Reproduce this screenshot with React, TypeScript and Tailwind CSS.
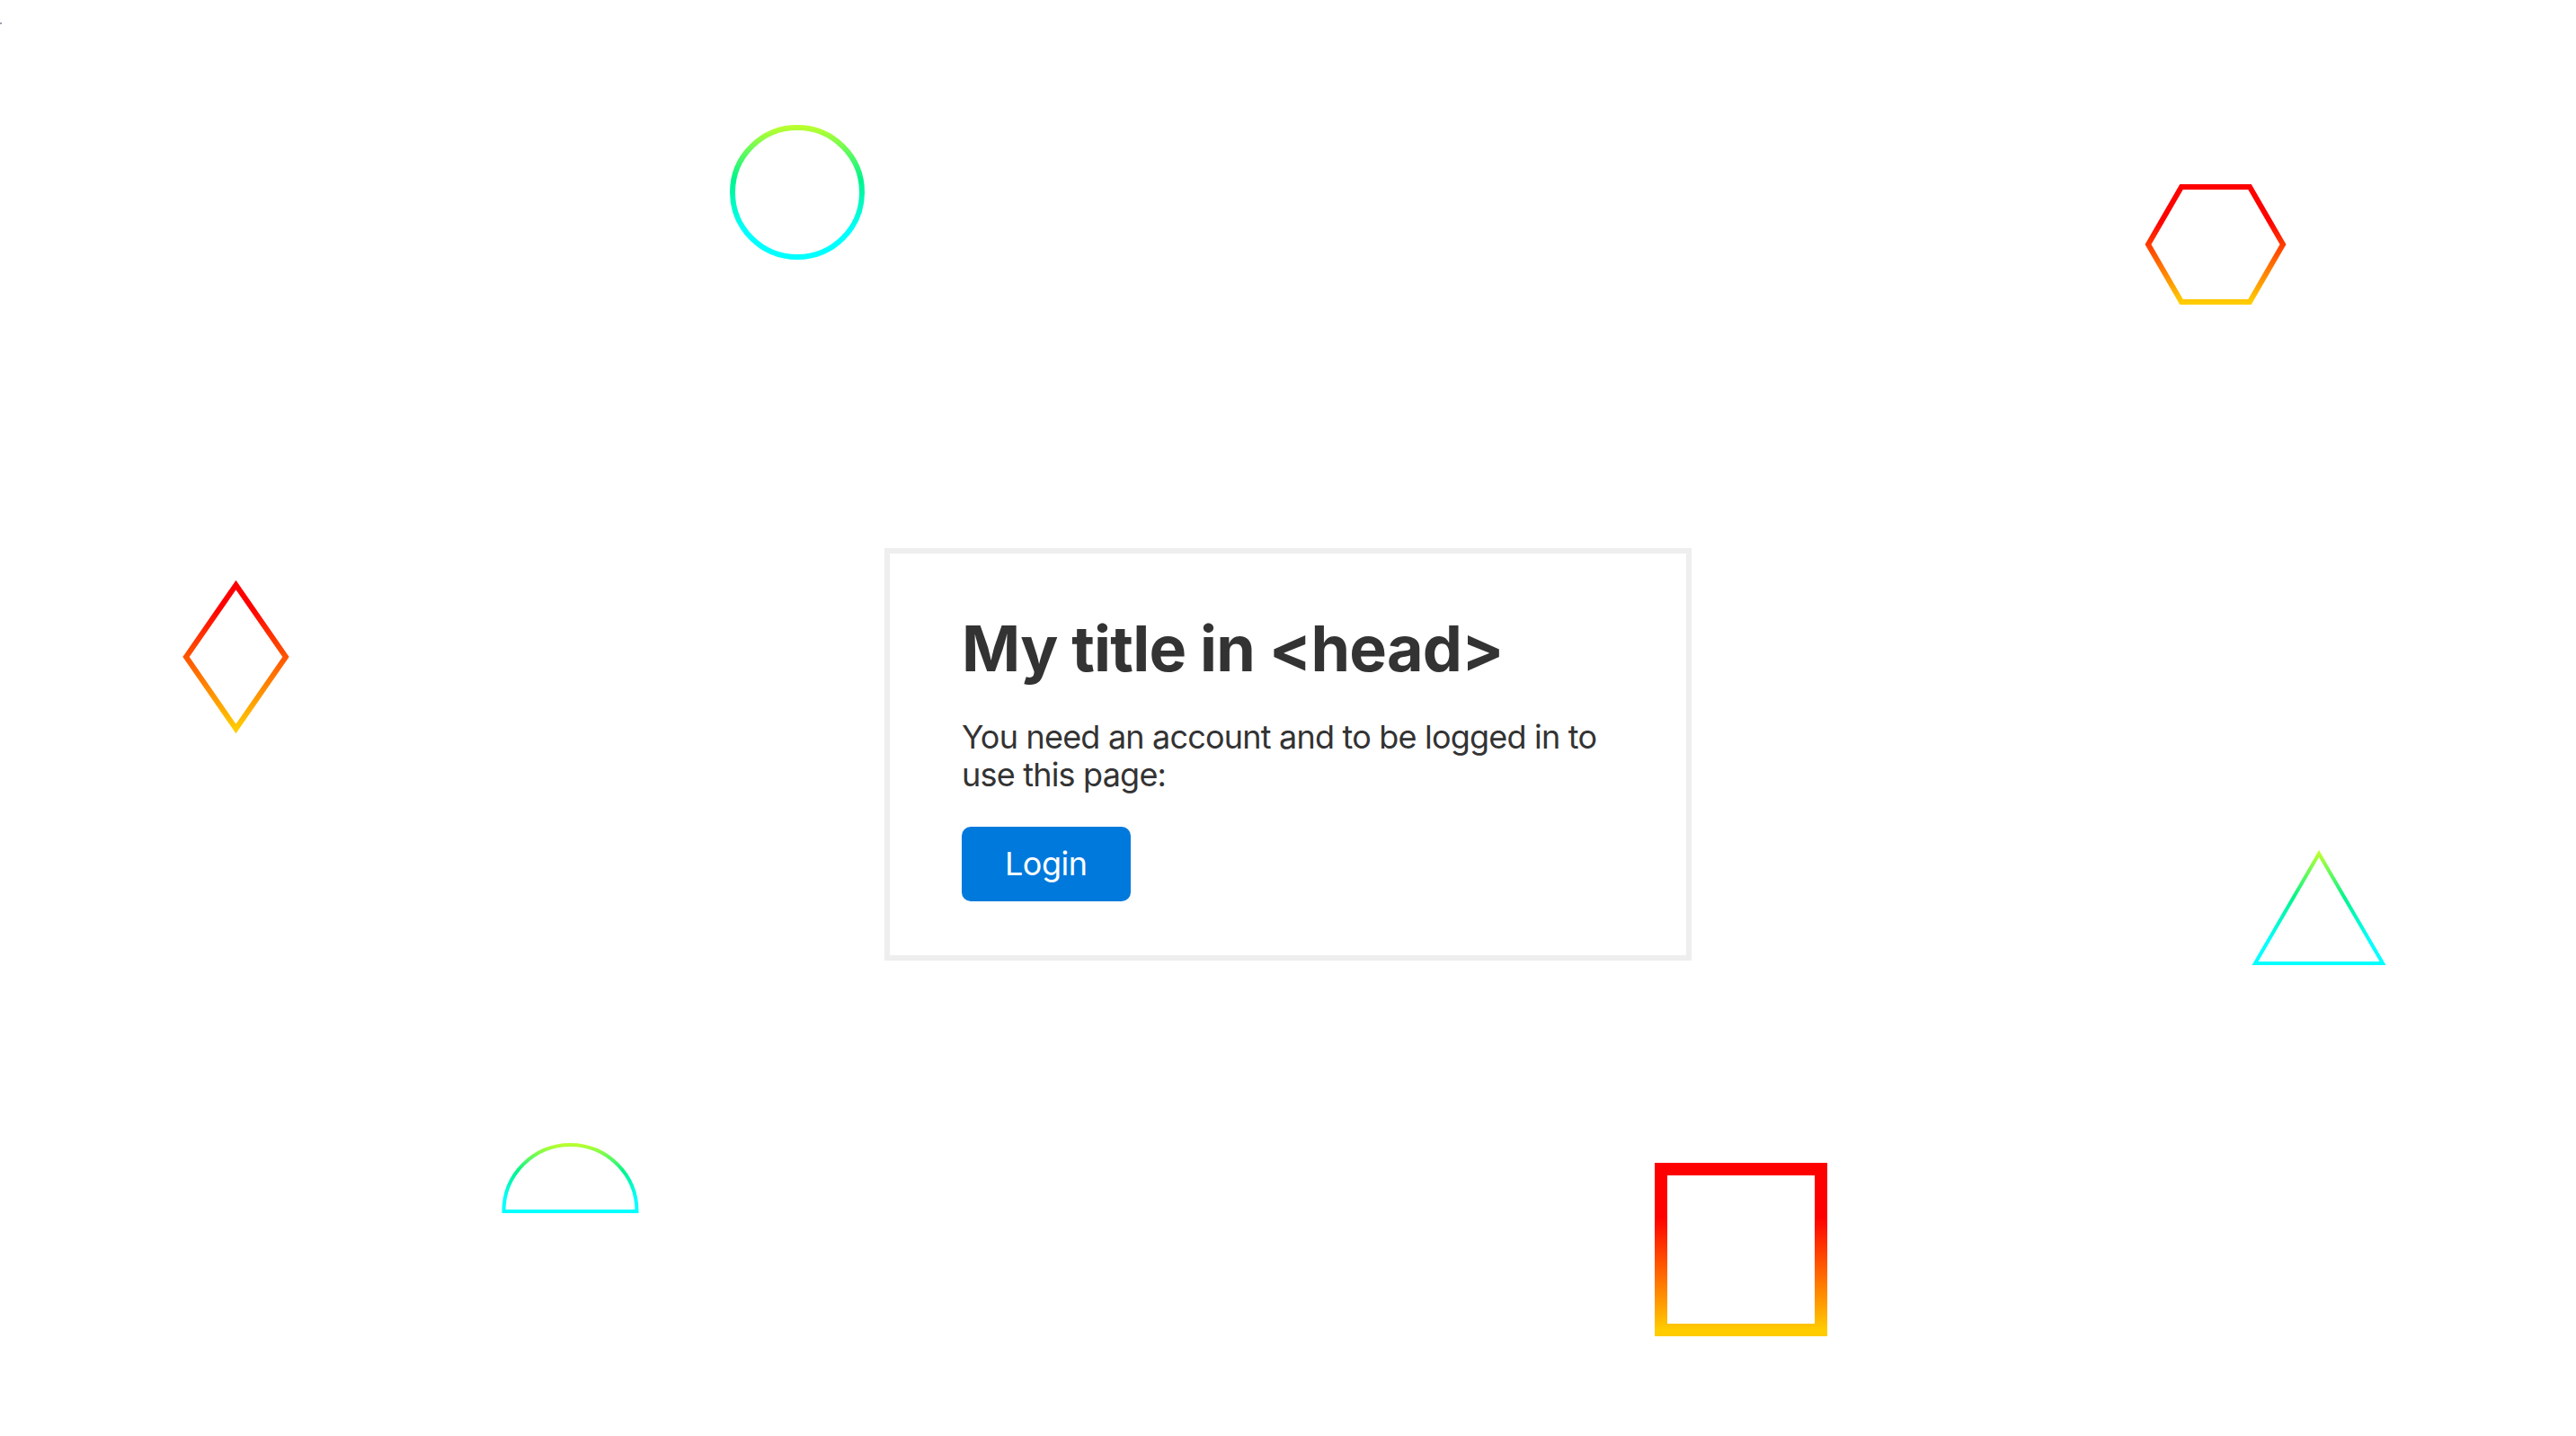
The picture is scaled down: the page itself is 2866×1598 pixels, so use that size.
import React from "react";

const font = { fontFamily: "Inter, 'Noto Sans', 'Liberation Sans', sans-serif" };

function WarmGradient({ id, start = 0.25 }: { id: string; start?: number }) {
  return (
    <linearGradient id={id} x1="0" y1="0" x2="0" y2="1">
      <stop offset={start} stopColor="#ff0000" />
      <stop offset="1" stopColor="#ffcc00" />
    </linearGradient>
  );
}

function CoolGradient({ id }: { id: string }) {
  return (
    <linearGradient id={id} x1="0" y1="0" x2="0" y2="1">
      <stop offset="0" stopColor="#b8ff30" />
      <stop offset="0.4" stopColor="#00f58c" />
      <stop offset="0.8" stopColor="#00ffff" />
    </linearGradient>
  );
}

export default function App() {
  return (
    <div
      className="relative min-h-screen w-full overflow-hidden bg-white flex items-center justify-center pt-[80px]"
      style={font}
    >
      {/* little speck top-left */}
      <span className="absolute left-0 top-[25px] w-[2px] h-[2px] bg-gray-400" />

      {/* circle */}
      <svg className="absolute left-[812px] top-[139px] overflow-visible" width="150" height="150">
        <defs>
          <CoolGradient id="g-circle" />
        </defs>
        <circle cx="75" cy="75" r="72" fill="none" stroke="url(#g-circle)" strokeWidth="6" />
      </svg>

      {/* hexagon */}
      <svg className="absolute left-[2387px] top-[205px] overflow-visible" width="156" height="134">
        <defs>
          <WarmGradient id="g-hex" start={0.3} />
        </defs>
        <polygon
          points="40,3 116,3 153,67 116,131 40,131 3,67"
          fill="none"
          stroke="url(#g-hex)"
          strokeWidth="6"
        />
      </svg>

      {/* diamond */}
      <svg className="absolute left-[203px] top-[647px] overflow-visible" width="119" height="168">
        <defs>
          <WarmGradient id="g-diamond" start={0.15} />
        </defs>
        <polygon
          points="59.5,4 115,84 59.5,164 4,84"
          fill="none"
          stroke="url(#g-diamond)"
          strokeWidth="6"
        />
      </svg>

      {/* triangle */}
      <svg className="absolute left-[2506px] top-[945px] overflow-visible" width="148" height="129">
        <defs>
          <CoolGradient id="g-tri" />
        </defs>
        <polygon
          points="74,5 145,127 3,127"
          fill="none"
          stroke="url(#g-tri)"
          strokeWidth="4"
        />
      </svg>

      {/* half circle */}
      <svg className="absolute left-[558px] top-[1272px] overflow-visible" width="153" height="78">
        <defs>
          <CoolGradient id="g-half" />
        </defs>
        <path
          d="M2.5 76 A74 74 0 0 1 150.5 76 Z"
          fill="none"
          stroke="url(#g-half)"
          strokeWidth="4"
        />
      </svg>

      {/* square */}
      <svg className="absolute left-[1841px] top-[1294px] overflow-visible" width="192" height="193">
        <defs>
          <WarmGradient id="g-square" start={0.3} />
        </defs>
        <rect x="7" y="7" width="178" height="179" fill="none" stroke="url(#g-square)" strokeWidth="14" />
      </svg>

      {/* card */}
      <div className="relative w-[898px] bg-white border-[6px] border-[#eeeeee] pl-[80px] pr-[60px] pt-[66px] pb-[60px] text-[#333333]">
        <h1 className="text-[70px] leading-[80px] font-bold tracking-[-0.8px]">My title in &lt;head&gt;</h1>
        <p className="mt-[37px] text-[36px] leading-[42px] tracking-[-0.8px]">
          You need an account and to be logged in to use this page:
        </p>
        <button className="mt-[37px] h-[83px] px-[48px] rounded-[10px] bg-[#0079dc] text-white text-[36px] leading-none tracking-[-0.5px]">
          Login
        </button>
      </div>
    </div>
  );
}
